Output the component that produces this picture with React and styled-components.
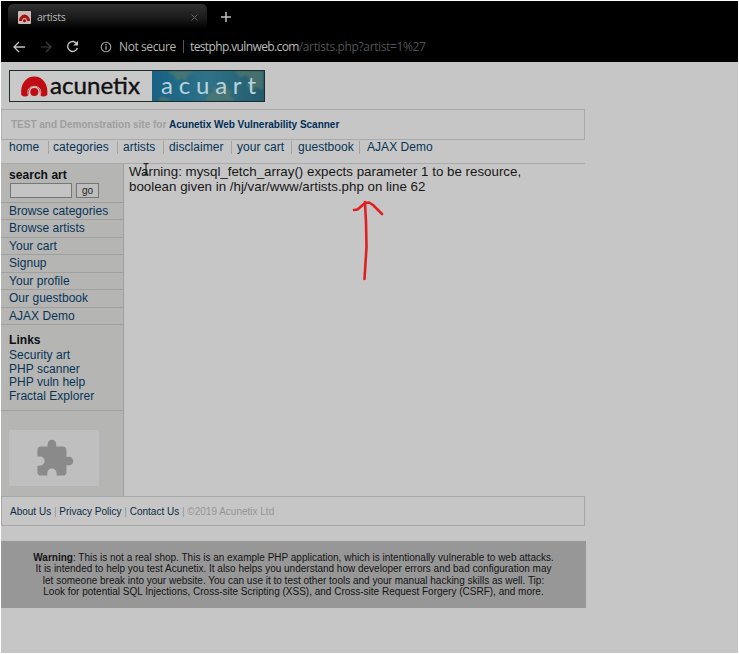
import React from "react";
import styled, { createGlobalStyle } from "styled-components";

const Global = createGlobalStyle`
  * { box-sizing: border-box; }
  html, body { margin: 0; background: #fff; }
  body { font-family: "Liberation Sans", Arial, sans-serif; overflow: hidden; }
`;

const Window = styled.div`
  width: 737px;
  height: 652px;
  margin: 1px;
  background: #c6c6c6;
  overflow: hidden;
  position: relative;
`;

const Chrome = styled.header`
  height: 61px;
  background: #000;
  font-family: "Open Sans", "Noto Sans", sans-serif;
  color: #b4b4b4;
`;

const TabStrip = styled.div`
  display: flex;
  align-items: flex-start;
  height: 30px;
  padding: 3px 0 0 7px;
`;

const Tab = styled.div`
  display: flex;
  align-items: center;
  width: 199px;
  height: 26px;
  padding: 0 9px 0 10px;
  border-radius: 5px 5px 0 0;
  background: linear-gradient(#303030, #1c1c1c 50%, #000 96%);
`;

const TabTitle = styled.span`
  flex: 1;
  margin-left: 6px;
  font-size: 10.5px;
  letter-spacing: -0.25px;
  color: #b8b8b8;
`;

const NewTab = styled.div`
  display: flex;
  padding: 8px 0 0 14px;
`;

const Toolbar = styled.div`
  display: flex;
  align-items: center;
  height: 31px;
  padding-left: 12px;
`;

const ToolIcon = styled.svg`
  flex: none;
  display: block;
  margin-right: ${(p) => p.$gap || 0}px;
`;

const Security = styled.span`
  width: 64px;
  margin-left: 7px;
  font-size: 12px;
  white-space: nowrap;
  letter-spacing: -0.4px;
`;

const Divider = styled.i`
  width: 1px;
  height: 13px;
  margin-right: 6px;
  background: #555;
`;

const Address = styled.span`
  font-size: 12px;
  white-space: nowrap;
  color: #bcbcbc;
  letter-spacing: -0.62px;
`;

const AddressPath = styled.span`
  color: #505356;
  letter-spacing: -0.37px;
`;

const Site = styled.div`
  width: 585px;
`;

const Masthead = styled.div`
  height: 47px;
  padding: 8px 0 0 8px;
`;

const Banner = styled.div`
  display: flex;
  align-items: center;
  width: 584px;
  height: 31px;
  padding-left: 9px;
  border: 1px solid #a9a9a9;
  border-left-color: #b2b2b2;
  font-size: 10px;
  font-weight: bold;
  color: #9e9e9e;
  white-space: pre;
  letter-spacing: -0.01px;
`;

const Strong = styled.a`
  color: #002f57;
`;

const Nav = styled.nav`
  display: flex;
  width: 584px;
  height: 24px;
  padding: 0 0 0 8px;
  border-bottom: 1px solid #aaa;
`;

const NavLink = styled.a`
  width: ${(p) => p.$w}px;
  font-size: 12px;
  line-height: 15px;
  letter-spacing: 0.05px;
  color: #083454;
  white-space: nowrap;
`;

const NavBar = styled.i`
  flex: none;
  width: 1px;
  height: 13px;
  margin: 1px ${(p) => p.$gap}px 0 0;
  background: #a4a4a4;
`;

const Columns = styled.div`
  display: flex;
  width: 584px;
  height: 332px;
`;

const Sidebar = styled.aside`
  width: 123px;
  height: 332px;
  background: #b5b5b4;
  border-right: 1px solid #9f9f9f;
`;

const Search = styled.div`
  height: 39px;
  padding: 3px 0 0 8px;
  border-bottom: 1px solid #9c9c9c;
`;

const Heading = styled.h3`
  margin: 0;
  font-size: 12px;
  line-height: 16px;
  letter-spacing: 0.05px;
  color: #0c1014;
`;

const SearchRow = styled.div`
  display: flex;
  gap: 4px;
  margin-left: 1px;
`;

const Field = styled.div`
  width: 62px;
  height: 15px;
  border: 1px solid #777;
  background: #c4c4c4;
`;

const Go = styled.button`
  width: 23px;
  height: 15px;
  padding: 0;
  border: 1px solid #777;
  background: #bdbdbd;
  font: 10px/12px "Liberation Sans", Arial, sans-serif;
  color: #222;
`;

const MenuItem = styled.a`
  display: block;
  height: 17.45px;
  padding-left: 8px;
  border-bottom: 1px solid #a0a0a0;
  font-size: 12px;
  line-height: 17.6px;
  letter-spacing: 0.03px;
  color: #083454;
`;

const Links = styled.div`
  height: 86px;
  padding: 7px 0 0 8px;
  border-bottom: 1px solid #a0a0a0;
`;

const LinkList = styled.div`
  padding-top: 1.4px;
`;

const SideLink = styled.a`
  display: block;
  font-size: 12px;
  line-height: 13.4px;
  letter-spacing: 0.03px;
  color: #083454;
`;

const Plugin = styled.div`
  display: flex;
  align-items: flex-start;
  width: 90px;
  height: 56px;
  margin: 19px 0 0 8px;
  padding: 8px 0 0 25px;
  background: #bfbfbf;
`;

const Content = styled.main`
  padding: 0 0 0 5px;
  font-size: 13.33px;
  line-height: 15px;
  color: #171717;
  white-space: nowrap;
`;

const Line = styled.div``;

const Footer = styled.footer`
  display: flex;
  align-items: center;
  width: 584px;
  height: 30px;
  padding-left: 8px;
  border: 1px solid #a6a6a6;
  font-size: 10px;
  color: #959595;
  white-space: pre;
`;

const FooterLink = styled.a`
  color: #0a2b45;
`;

const Notice = styled.div`
  width: 585px;
  height: 67px;
  margin-top: 15px;
  padding: 11px 0 0;
  background: #979797;
  text-align: center;
  font-size: 10px;
  line-height: 11.4px;
  color: #141414;
  white-space: nowrap;
`;

const Overlay = styled.svg`
  position: absolute;
  left: ${(p) => p.$x}px;
  top: ${(p) => p.$y}px;
`;

const nav = [
  ["home", 39, 4],
  ["categories", 64, 5],
  ["artists", 40, 5],
  ["disclaimer", 62, 5],
  ["your cart", 54, 6],
  ["guestbook", 61, 7],
];

const menu = ["Browse categories", "Browse artists", "Your cart", "Signup", "Your profile", "Our guestbook", "AJAX Demo"];
const links = ["Security art", "PHP scanner", "PHP vuln help", "Fractal Explorer"];
const notice = [
  ": This is not a real shop. This is an example PHP application, which is intentionally vulnerable to web attacks.",
  "It is intended to help you test Acunetix. It also helps you understand how developer errors and bad configuration may",
  "let someone break into your website. You can use it to test other tools and your manual hacking skills as well. Tip:",
  "Look for potential SQL Injections, Cross-site Scripting (XSS), and Cross-site Request Forgery (CSRF), and more.",
];

function Logo() {
  return (
    <svg width="256" height="32" viewBox="0 0 256 32">
      <defs>
        <linearGradient id="sea" x1="0" x2="1">
          <stop offset="0" stopColor="#176184" />
          <stop offset="0.5" stopColor="#2f7288" />
          <stop offset="1" stopColor="#225b6c" />
        </linearGradient>
        <filter id="soft"><feGaussianBlur stdDeviation="1" /></filter>
      </defs>
      <rect width="256" height="32" fill="#c9c9c9" />
      <rect x="143" width="113" height="32" fill="url(#sea)" />
      <g fill="#55796d" opacity="0.7" filter="url(#soft)">
        <path d="M158 1l7 5 3 5 5-3 4 4 1-6 8-5z" />
        <path d="M196 31l4-7 5-2-2-5 7 1 5-6 3 6 5 3-2 4 5 6z" />
        <path d="M226 1l5 6 7-2 3 7-4 4 7 5 3-4 7 3V1z" />
        <path d="M149 31l3-5 6 2 5 3z" />
      </g>
      <path d="M12.3 25C11 14 17 6.5 25.3 6.5S39.5 14 38.3 25Q34 28 31 25Q31.5 16.5 25.3 16.5T19.6 25Q16 28 12.3 25Z" fill="#c00d14" />
      <path d="M19.8 26C17 20 20.5 16.3 25.3 16.3S33.5 20 30.8 26" fill="none" stroke="#dba9a6" strokeWidth="1" />
      <circle cx="25.3" cy="22" r="4" fill="#c00d14" />
      <text x="41" y="24" textLength="90" lengthAdjust="spacingAndGlyphs" fontFamily="Lato, sans-serif" fontSize="24" fill="#101010" stroke="#101010" strokeWidth="0.4">acunetix</text>
      <text x="152" y="24" textLength="95" fontFamily="Lato, sans-serif" fontSize="24" fill="#b7d3dc">acuart</text>
      <rect x="0.5" y="0.5" width="255" height="31" fill="none" stroke="#202b2c" />
    </svg>
  );
}

export default function App() {
  return (
    <>
      <Global />
      <Window>
        <Chrome>
          <TabStrip>
            <Tab>
              <ToolIcon width="13" height="13" viewBox="0 0 13 13">
                <rect width="13" height="13" rx="1" fill="#c9bdb8" />
                <path d="M1 10a5.5 6.5 0 0 1 11 0H9a2.5 3 0 0 0-5 0z" fill="#a81216" />
                <circle cx="6.5" cy="9.7" r="1.6" fill="#a81216" />
              </ToolIcon>
              <TabTitle>artists</TabTitle>
              <ToolIcon width="7" height="7" viewBox="0 0 7 7">
                <path d="M.5.5l6 6M6.5.5l-6 6" stroke="#666" fill="none" />
              </ToolIcon>
            </Tab>
            <NewTab>
              <ToolIcon width="10" height="10" viewBox="0 0 10 10">
                <path d="M5 0v10M0 5h10" stroke="#c0c0c0" strokeWidth="1.5" fill="none" />
              </ToolIcon>
            </NewTab>
          </TabStrip>
          <Toolbar>
            <ToolIcon $gap={16} width="12" height="12" viewBox="0 0 12 12">
              <path d="M6 1L1 6l5 5M1 6h11" stroke="#c4c4c4" strokeWidth="1.3" fill="none" />
            </ToolIcon>
            <ToolIcon $gap={14} width="11" height="12" viewBox="0 0 11 12">
              <path d="M5 1l5 5-5 5M10 6H0" stroke="#3e3e3e" strokeWidth="1.2" fill="none" />
            </ToolIcon>
            <ToolIcon $gap={21} width="13" height="13" viewBox="0 0 13 13">
              <path d="M11 4A5 5 0 1 0 11.4 8" stroke="#c4c4c4" strokeWidth="1.4" fill="none" />
              <path d="M12 0.8V5.5H7.3z" fill="#c4c4c4" />
            </ToolIcon>
            <ToolIcon width="12" height="12" viewBox="0 0 12 12">
              <circle cx="6" cy="6" r="4.8" stroke="#a6a6a6" strokeWidth="1.1" fill="none" />
              <path d="M6 5.3v3.5M6 3v1.3" stroke="#b0b0b0" strokeWidth="1.3" />
            </ToolIcon>
            <Security>Not secure</Security>
            <Divider />
            <Address>
              testphp.vulnweb.com<AddressPath>/artists.php?artist=1%27</AddressPath>
            </Address>
          </Toolbar>
        </Chrome>
        <Site>
          <Masthead><Logo /></Masthead>
          <Banner>
            TEST and Demonstration site for <Strong>Acunetix Web Vulnerability Scanner</Strong>
          </Banner>
          <Nav>
            {nav.map(([label, w, gap]) => (
              <React.Fragment key={label}>
                <NavLink $w={w}>{label}</NavLink>
                <NavBar $gap={gap} />
              </React.Fragment>
            ))}
            <NavLink $w={70}>AJAX Demo</NavLink>
          </Nav>
          <Columns>
            <Sidebar>
              <Search>
                <Heading>search art</Heading>
                <SearchRow><Field /><Go>go</Go></SearchRow>
              </Search>
              {menu.map((m) => <MenuItem key={m}>{m}</MenuItem>)}
              <Links>
                <Heading>Links</Heading>
                <LinkList>
                  {links.map((l) => <SideLink key={l}>{l}</SideLink>)}
                </LinkList>
              </Links>
              <Plugin>
                <ToolIcon width="41" height="41" viewBox="0 0 24 24">
                  <path fill="#8a8a8a" d="M20.5 11H19V7c0-1.1-.9-2-2-2h-4V3.5a2.5 2.5 0 0 0-5 0V5H4c-1.1 0-2 .9-2 2v3.8h1.5c1.5 0 2.7 1.2 2.7 2.7S5 16.2 3.5 16.2H2V20c0 1.1.9 2 2 2h3.8v-1.5c0-1.5 1.2-2.7 2.7-2.7s2.7 1.2 2.7 2.7V22H17c1.1 0 2-.9 2-2v-4h1.5a2.5 2.5 0 0 0 0-5z" />
                </ToolIcon>
              </Plugin>
            </Sidebar>
            <Content>
              <Line>Warning: mysql_fetch_array() expects parameter 1 to be resource,</Line>
              <Line>boolean given in /hj/var/www/artists.php on line 62</Line>
            </Content>
          </Columns>
          <Footer>
            <FooterLink>About Us</FooterLink> | <FooterLink>Privacy Policy</FooterLink> | <FooterLink>Contact Us</FooterLink> | ©2019 Acunetix Ltd
          </Footer>
          <Notice>
            {notice.map((text, i) => (
              <Line key={text}>{i === 0 && <b>Warning</b>}{text}</Line>
            ))}
          </Notice>
        </Site>
        <Overlay $x={350} $y={196} width="36" height="86" viewBox="0 0 36 86">
          <path d="M3 13L6.5 12.5 14 6 18 5.5 22 8 31 17M14 5L15 25 15.5 50 13.5 82" fill="none" stroke="#e01f23" strokeWidth="2.6" strokeLinecap="round" strokeLinejoin="round" />
        </Overlay>
        <Overlay $x={142} $y={162} width="6" height="12" viewBox="0 0 6 12">
          <path d="M0.5.7h5M3 .7v10.6M.5 11.3h5" fill="none" stroke="#111" />
        </Overlay>
      </Window>
    </>
  );
}
